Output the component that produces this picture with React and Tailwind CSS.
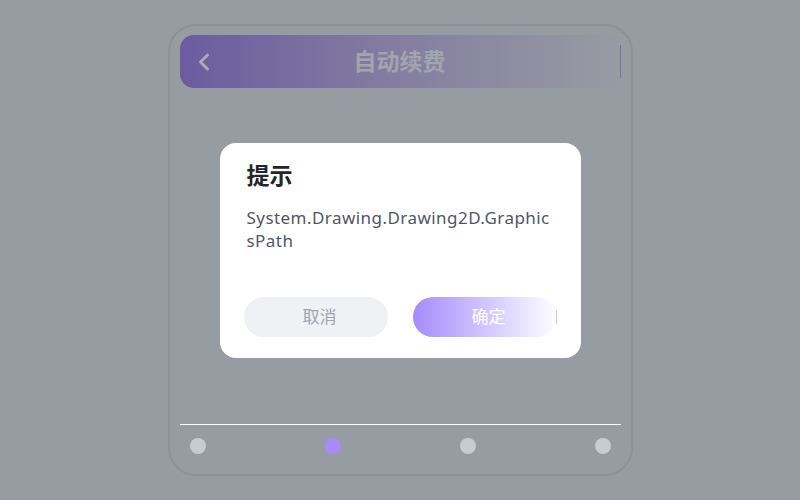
import { ChevronLeft } from "lucide-react";

const DOTS = ["#c8cbd2", "#a78bfa", "#c8cbd2", "#c8cbd2"];

const App = () => {
  return (
    <div
      className="w-[800px] h-[500px] bg-[#979ba2] flex items-center justify-center"
      style={{ fontFamily: '"Noto Sans", "Noto Sans CJK SC", sans-serif' }}
    >
      <div className="relative w-[465px] h-[452px] rounded-[28px] border-2 border-[#8d9198] flex flex-col px-[10px] pt-[9px] pb-[20px]">
        {/* header */}
        <div className="h-[53px] flex items-center">
          <div className="flex-1 h-full rounded-l-[14px] bg-gradient-to-r from-[#6a5c9f] via-[#857ea0] to-[#979ba2] flex items-center relative">
            <ChevronLeft size={28} strokeWidth={2.5} className="ml-[10px] text-[#a9acb4]" />
            <div className="absolute inset-0 flex items-center justify-center text-[23px] font-bold text-[#a2a5ad]">
              自动续费
            </div>
          </div>
          <div className="w-px h-[33px] bg-[#7a70b0]" />
        </div>

        <div className="flex-1" />

        {/* bottom nav */}
        <div className="border-t border-white pt-[13px] px-[10px] flex justify-between">
          {DOTS.map((c, i) => (
            <span key={i} className="w-4 h-4 rounded-full" style={{ backgroundColor: c }} />
          ))}
        </div>

        {/* dialog */}
        <div className="absolute left-[50px] top-[117px] w-[361px] h-[215px] bg-white rounded-2xl px-[24px] pt-[17px] pb-[21px] flex flex-col">
          <h2 className="ml-[3px] text-[23px] font-bold text-[#22252b] leading-[30px]">提示</h2>
          <p className="ml-[3px] mt-[16px] text-[17px] leading-[23px] tracking-[0.45px] text-[#505664] break-all">
            System.Drawing.Drawing2D.GraphicsPath
          </p>
          <div className="flex-1" />
          <div className="flex justify-between">
            <button className="w-[144px] h-[40px] pl-2 rounded-full bg-[#f0f1f4] text-[17px] text-[#a0a4ad]">
              取消
            </button>
            <div className="flex items-center">
              <button className="w-[144px] h-[40px] pl-2 rounded-full bg-gradient-to-r from-[#a78bfa] to-white text-[17px] text-white">
                确定
              </button>
              <div className="w-px h-[14px] -ml-px bg-[#cfc8ee]" />
            </div>
          </div>
        </div>
      </div>
    </div>
  );
};

export default App;
